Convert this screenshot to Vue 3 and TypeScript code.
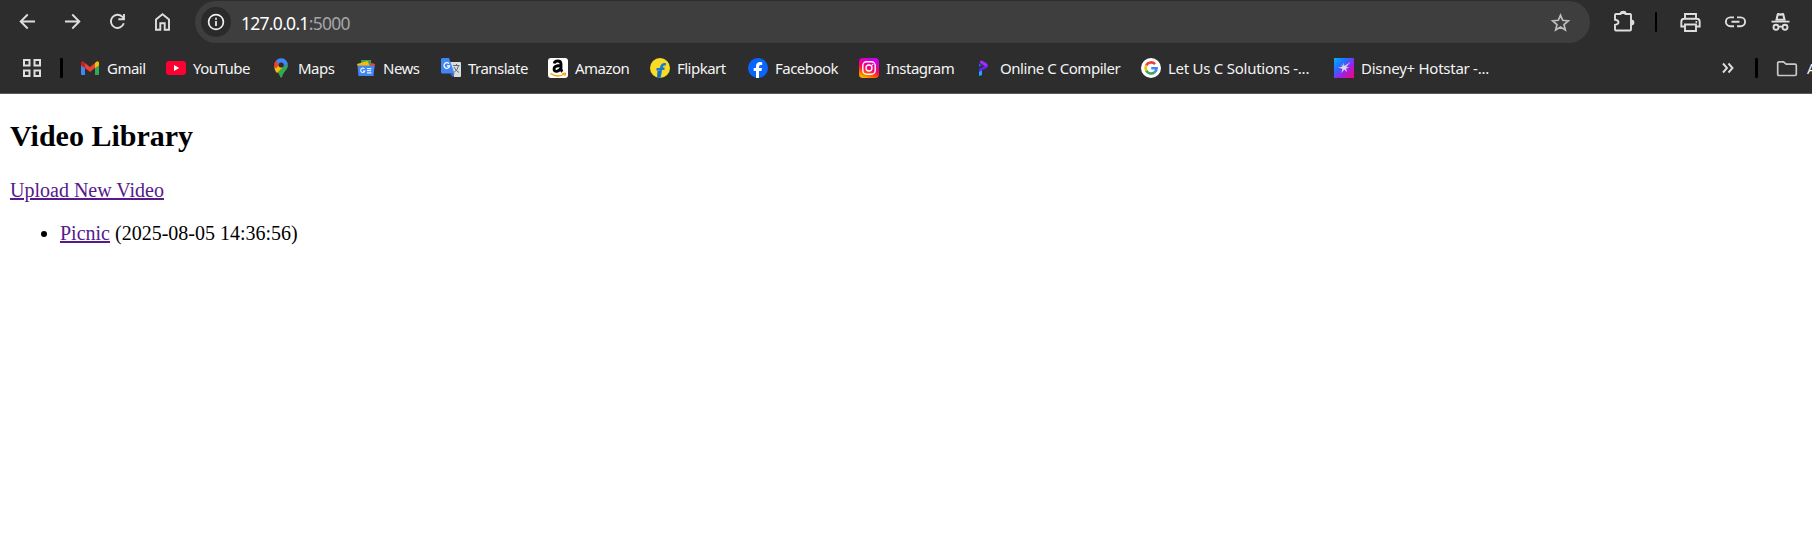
<script setup lang="ts">
interface Bookmark {
  id: string
  label: string
}

interface Video {
  id: number
  title: string
  uploaded: string
}

const bookmarks: Bookmark[] = [
  { id: 'gmail', label: 'Gmail' },
  { id: 'youtube', label: 'YouTube' },
  { id: 'maps', label: 'Maps' },
  { id: 'news', label: 'News' },
  { id: 'translate', label: 'Translate' },
  { id: 'amazon', label: 'Amazon' },
  { id: 'flipkart', label: 'Flipkart' },
  { id: 'facebook', label: 'Facebook' },
  { id: 'instagram', label: 'Instagram' },
  { id: 'compiler', label: 'Online C Compiler' },
  { id: 'google', label: 'Let Us C Solutions -...' },
  { id: 'hotstar', label: 'Disney+ Hotstar -...' },
]

const videos: Video[] = [{ id: 1, title: 'Picnic', uploaded: '2025-08-05 14:36:56' }]
</script>

<template>
  <div class="window">
    <header class="chrome">
      <div class="toolbar">
        <button class="tool" aria-label="Back">
          <svg viewBox="0 0 25 25"><path d="M20 12.500H6.500M12.700 5.500l-7 7 7 7" /></svg>
        </button>
        <button class="tool" aria-label="Forward">
          <svg viewBox="0 0 25 25"><path d="M5 12.500h13.500M12.300 5.500l7 7-7 7" /></svg>
        </button>
        <button class="tool" aria-label="Reload">
          <svg viewBox="0 0 25 25"><path d="M18.800 14.300A6.600 6.600 0 1 1 17.200 7.700L18.800 9.300M19 5v5.200h-5.700" /></svg>
        </button>
        <button class="tool" aria-label="Home">
          <svg viewBox="0 0 25 25"><path d="M6 20.800V10.500l6.500-5.200 6.500 5.200v10.300h-4.300v-6.500h-4.400v6.500z" /></svg>
        </button>
        <div class="omnibox">
          <span class="site-info">
            <svg viewBox="0 0 30 30">
              <circle cx="15" cy="15" r="7.400" />
              <path d="M15 14v5M15 10.700v2" />
            </svg>
          </span>
          <span class="url"><span class="host">127.0.0.1</span><span class="port">:5000</span></span>
          <svg class="star" viewBox="0 0 25 25">
            <path d="M12.500 5.100l2.200 5.200 5.600.5-4.300 3.700 1.300 5.500-4.800-3-4.800 3 1.300-5.500-4.300-3.700 5.600-.5z" />
          </svg>
        </div>
        <button class="tool puzzle" aria-label="Extensions">
          <svg viewBox="0 0 25 25">
            <path d="M5 6h4.500a2.500 2 0 0 1 5 0H19q1 0 1 1v14.500q0 1-1 1H5q-1 0-1-1v-4.600q3.500-.5 3.500-2.600T4 11.700V7q0-1 1-1z" />
            <path class="solid" d="M9.500 6a3 3.300 0 0 1 6 0zM20 11.500a3.400 2.900 0 0 1 0 5.800z" />
          </svg>
        </button>
        <i class="divider"></i>
        <button class="tool printer" aria-label="Print">
          <svg viewBox="0 0 25 25">
            <path d="M7 9V5h11v4M7 17.500H3.300V13q0-3.200 3-3.200h12.400q3 0 3 3.200v4.500H18M7 15.500h11V22H7z" />
            <circle class="solid" cx="18.300" cy="13" r="1" />
          </svg>
        </button>
        <button class="tool" aria-label="Copy link">
          <svg viewBox="0 0 25 25"><path d="M11 8.400H7.300a4.400 4.400 0 0 0 0 8.800H11M14 8.400h3.700a4.400 4.400 0 0 1 0 8.800H14M8.500 12.800h8" /></svg>
        </button>
        <button class="tool" aria-label="Incognito">
          <svg viewBox="0 0 25 25">
            <path class="solid" d="M7.200 11.700 8.700 5.300q.4-1.500 1.900-1.200l1.900.5 1.900-.5q1.500-.3 1.900 1.200l1.500 6.400z" />
            <path class="notch" d="M9.800 9.700l.7-3.200 2 .3 2-.3.7 3.200z" />
            <path d="M3.500 12.600h18M11 18q1.500-1.200 3 0" />
            <circle cx="8" cy="18.300" r="2.500" /><circle cx="17" cy="18.300" r="2.500" />
          </svg>
        </button>
      </div>

      <nav class="bookmarks">
        <svg class="apps" viewBox="0 0 20 20">
          <path d="M2 2h5.500v5.500H2zM12.500 2H18v5.500h-5.500zM2 12.500h5.500V18H2zM12.500 12.500H18V18h-5.500z" />
        </svg>
        <i class="divider"></i>
        <div class="links">
          <a v-for="item in bookmarks" :key="item.id" :class="['bookmark', item.id]">
            <svg viewBox="0 0 20 20">
              <g v-if="item.id === 'gmail'">
                <path fill="#4285f4" d="M1 5l4 3v9H2q-1 0-1-1z" />
                <path fill="#34a853" d="M15 8l4-3v11q0 1-1 1h-3z" />
                <path fill="#fbbc04" d="M15 5q2.500-3 4-.5v3L15 10z" />
                <path fill="#c5221f" d="M1 4.500Q2.500 2 5 5v5L1 7.500z" />
                <path fill="#ea4335" d="M5 5l5 4 5-4v5l-5 4-5-4z" />
              </g>
              <g v-else-if="item.id === 'youtube'">
                <rect y="3" width="20" height="14" rx="3" fill="#ff0033" />
                <path fill="#fff" d="M8 7l5.300 3L8 13z" />
              </g>
              <g v-else-if="item.id === 'maps'">
                <path fill="#34a853" d="M16.900 6c.6 6-4.400 7-5.900 13q-1 1.500-1.700 0C8.500 16 6.500 14.500 5 12z" />
                <path fill="#fbbc04" d="M3.500 8L7 7l5 2-6 6q-3-3-2.500-7z" />
                <path fill="#ea4335" d="M5 2.500L9 6l-4 4.500Q1.500 6.500 5 2.500z" />
                <path fill="#4285f4" d="M5 2.600Q8 -.8 12.500.5 16 2 16.900 6L12 9 7.500 6z" />
                <circle cx="10.200" cy="7" r="2.600" fill="#2d2d2d" />
              </g>
              <g v-else-if="item.id === 'news'">
                <path fill="#34a853" d="M5 2h10v7H5z" />
                <path fill="#ea4335" d="M14 4.500l5 1.500L17.500 14H13z" />
                <path fill="#fbbc04" d="M1 6l10.500-3L15 11H3z" />
                <path fill="#4285f4" d="M1.500 7.500h17L17.500 18h-15z" />
                <path fill="none" stroke="#e6efff" stroke-width="1.200" d="M8.500 10.800a2.200 2.200 0 1 0 .4 2.300H7M11 10.600h4.500M11 12.700h4M11 14.800h4.500" />
              </g>
              <g v-else-if="item.id === 'translate'">
                <path fill="#dadce0" d="M8 4h11q1 0 1 1v13q0 1-1 1h-6z" />
                <path fill="#4285f4" d="M1.500 0H8l5.500 15.500H1.500Q0 15.500 0 14V1.500Q0 0 1.500 0z" />
                <path fill="#3367d6" d="M9 15.500h4.500L11.500 19z" />
                <path fill="none" stroke="#fff" stroke-width="1.300" d="M8 5.700A2.800 2.800 0 1 0 8.600 8H6" />
                <path fill="none" stroke="#5f6d75" d="M12 7.500h6.500M15.500 6v1.500M17.500 8q-1 4-4.500 6.500M13 9q1.500 3.500 5 5.500" />
              </g>
              <g v-else-if="item.id === 'amazon'">
                <rect width="20" height="20" rx="3" fill="#fff" />
                <path fill="none" stroke="#000" stroke-width="2.800" d="M6.200 5.500Q6.700 3 9.800 3t3.200 3v5q0 1.400 1.400 2.600M13 7.500q-7 0-7 3.600 0 2.300 2.500 2.300T13 10" />
                <path fill="none" stroke="#ff9900" stroke-width="1.300" d="M2.500 15.500q7 4.500 13.500.8M14.500 15.300h3q0 1.500-1 2.500" />
              </g>
              <g v-else-if="item.id === 'flipkart'">
                <circle cx="10" cy="10" r="10" fill="#f8dc25" />
                <path fill="none" stroke="#1478d4" stroke-width="2.500" d="M15.800 6.500q-3.800-1-4.500 3L9.500 19.500M6.500 11.500l8-1" />
                <path fill="#126bc3" d="M7.500 13h3l-1 7-2.500-.6z" />
              </g>
              <g v-else-if="item.id === 'facebook'">
                <circle cx="10" cy="10" r="10" fill="#0866ff" />
                <path fill="#fff" d="M8 20v-7H5.700v-3H8V8.500Q8 4 12 4q1.500 0 2.200.3V7h-1.400Q11 7 11 8.800V10h3l-.6 3H11v7z" />
              </g>
              <g v-else-if="item.id === 'instagram'">
                <defs>
                  <linearGradient id="insta" x1="0.200" y1="1" x2="0.600" y2="0">
                    <stop offset="0" stop-color="#ffbd00" /><stop offset=".25" stop-color="#ff5a00" />
                    <stop offset=".5" stop-color="#ff0069" /><stop offset="1" stop-color="#c800f0" />
                  </linearGradient>
                </defs>
                <rect width="20" height="20" rx="4" fill="url(#insta)" />
                <rect x="3.800" y="3.800" width="12.400" height="12.400" rx="3.700" fill="none" stroke="#fff" stroke-width="1.400" />
                <circle cx="10" cy="10" r="3" fill="none" stroke="#fff" stroke-width="1.400" />
                <circle cx="13.500" cy="6.500" r=".8" fill="#fff" />
              </g>
              <g v-else-if="item.id === 'compiler'">
                <path fill="#1769e8" d="M6 5.500l3 1.700L6 9z" />
                <path fill="#17a8ff" d="M6 12.500l3-1.500v6L6 18z" />
                <path fill="#6a1fff" d="M14.500 7v2.500L6 14v-3l5.500-3z" />
                <path fill="#a02cff" d="M7 3l2-.5L14.500 6v2.500L11.500 8 7 5z" />
              </g>
              <g v-else-if="item.id === 'google'" fill="none" stroke-width="2.600">
                <circle cx="10" cy="10" r="10" fill="#fff" />
                <path stroke="#ea4335" d="M5.200 7.300a5.600 5.600 0 0 1 8.900-1.200" />
                <path stroke="#fbbc05" d="M5.200 12.700a5.600 5.600 0 0 1 0-5.400" />
                <path stroke="#34a853" d="M13.600 14.300a5.600 5.600 0 0 1-8.400-1.600" />
                <path stroke="#4285f4" d="M10.200 10.200h5.400q0 2.500-2 4.100" />
              </g>
              <g v-else>
                <defs>
                  <linearGradient id="hotstar" x1="0" y1="0" x2="1" y2="1">
                    <stop offset="0" stop-color="#00b2ff" /><stop offset=".35" stop-color="#286bff" />
                    <stop offset=".62" stop-color="#9d20e8" /><stop offset="1" stop-color="#ff006b" />
                  </linearGradient>
                </defs>
                <path fill="url(#hotstar)" d="M0 0h20v20H0z" />
                <path fill="#dcd8e6" d="M9.500 4.500l1 3.600L16.500 4l-4.300 5 3.300.7-3.500.8 1 3.500-2.800-2.500-2.700 3.500.9-4.200-4.400-1.300 4.400-.7L7 6.200l2.200 1.800z" />
              </g>
            </svg>
            <span class="label">{{ item.label }}</span>
          </a>
        </div>
        <svg class="more" viewBox="0 0 14 14"><path d="M2 2.500L6 7l-4 4.500M7.500 2.500l4 4.500-4 4.500" /></svg>
        <i class="divider"></i>
        <svg class="folder" viewBox="0 0 22 17">
          <path d="M3 1.800h4.500l2.700 2.400H19q1.300 0 1.300 1.300v8.700q0 1.300-1.300 1.300H3q-1.300 0-1.300-1.300V3q0-1.200 1.300-1.200z" />
        </svg>
        <span class="all">A</span>
      </nav>
    </header>

    <main class="page">
      <h2>Video Library</h2>
      <a class="visited" href="#">Upload New Video</a>
      <ul>
        <li v-for="video in videos" :key="video.id">
          <a class="visited" href="#">{{ video.title }}</a> ({{ video.uploaded }})
        </li>
      </ul>
    </main>
  </div>
</template>

<style>
body {
  margin: 0;
  background: #fff;
}
</style>

<style scoped>
.window {
  height: 543px;
  overflow: hidden;
  background: #fff;
}

.chrome {
  box-sizing: border-box;
  height: 94px;
  background: #2d2d2d;
  border-bottom: 1px solid #5b5858;
  font-family: "Noto Sans", "Open Sans", sans-serif;
  overflow: hidden;
}

svg {
  display: block;
  flex: none;
}

.toolbar {
  display: flex;
  align-items: center;
  height: 43px;
  padding-left: 5px;
}

.tool {
  flex: none;
  display: flex;
  align-items: center;
  justify-content: center;
  width: 45px;
  height: 43px;
  padding: 0;
  border: 0;
  background: none;
}

.tool svg {
  width: 25px;
  height: 25px;
  fill: none;
  stroke: #dedede;
  stroke-width: 1.9;
}

.tool .solid {
  fill: #dedede;
  stroke: none;
}

.tool .notch {
  fill: #2d2d2d;
  stroke: none;
}

.omnibox {
  box-sizing: border-box;
  flex: none;
  display: flex;
  align-items: center;
  width: 1395px;
  height: 42px;
  margin: 1px 0 0 10px;
  padding: 0 17px 0 6px;
  border-radius: 21px;
  background: #3e3e3e;
}

.site-info {
  width: 30px;
  height: 30px;
  border-radius: 50%;
  background: #2a2a2a;
}

.site-info svg {
  fill: none;
  stroke: #f0f0f0;
  stroke-width: 1.7;
}

.url {
  margin-left: 10px;
  padding-top: 2px;
  font-size: 17.5px;
  line-height: 24px;
  letter-spacing: -0.72px;
  color: #fff;
}

.port {
  color: #a5a5a5;
}

.star {
  width: 25px;
  height: 25px;
  margin-left: auto;
  fill: none;
  stroke: #bdbdbd;
  stroke-width: 1.7;
}

.puzzle {
  margin-left: 11px;
}

.puzzle svg {
  margin-top: -2px;
}

.divider {
  flex: none;
  width: 3px;
  height: 20px;
  border-radius: 1px;
  background: #000;
}

.toolbar .divider {
  margin-left: 9px;
  width: 2px;
}

.printer {
  margin-left: 11px;
}

.bookmarks {
  display: flex;
  align-items: center;
  height: 50px;
}

.apps {
  width: 20px;
  height: 20px;
  margin: 0 18px 0 22px;
  fill: none;
  stroke: #dedede;
  stroke-width: 2;
}

.links {
  flex: none;
  display: grid;
  grid-template-columns: 86px 105px 85px 85px 107px 102px 98px 111px 114px 168px 193px 387px;
  margin-left: 17px;
}

.bookmark {
  display: flex;
  align-items: center;
  gap: 7px;
  color: #f4f4f4;
  font-size: 15px;
  line-height: 20px;
  white-space: nowrap;
}

.bookmark svg {
  width: 20px;
  height: 20px;
}

.label {
  margin-top: -1px;
  letter-spacing: -0.52px;
}

.compiler .label {
  letter-spacing: -0.45px;
}

.google .label,
.hotstar .label {
  letter-spacing: -0.26px;
}

.more {
  width: 14px;
  height: 14px;
  margin-right: 20px;
  fill: none;
  stroke: #dedede;
  stroke-width: 1.9;
}

.folder {
  width: 22px;
  height: 17px;
  margin: 0 9px 0 18px;
  fill: none;
  stroke: #c8c8c8;
  stroke-width: 1.7;
}

.all {
  flex: none;
  color: #f4f4f4;
  font-size: 15px;
  line-height: 20px;
}

.page {
  padding: 0 10px;
  overflow: hidden;
  color: #000;
  font-family: "Liberation Serif", "Times New Roman", serif;
  font-size: 20px;
}

h2 {
  margin: 25px 0 26px;
  font-size: 30px;
  line-height: 34px;
}

ul {
  margin: 20px 0;
  padding-left: 50px;
}

.visited {
  color: #551a8b;
  text-decoration: underline;
}
</style>
